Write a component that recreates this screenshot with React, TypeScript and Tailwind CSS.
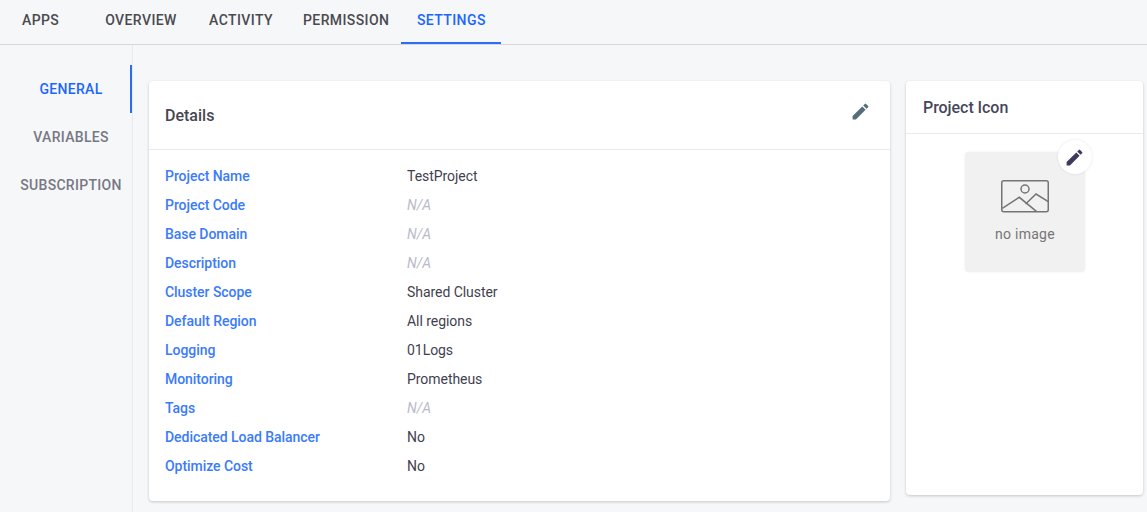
const TABS = ["OVERVIEW", "ACTIVITY", "PERMISSION", "SETTINGS"];
const SIDE_ITEMS = ["GENERAL", "VARIABLES", "SUBSCRIPTION"];

const DETAILS: { label: string; value?: string }[] = [
  { label: "Project Name", value: "TestProject" },
  { label: "Project Code" },
  { label: "Base Domain" },
  { label: "Description" },
  { label: "Cluster Scope", value: "Shared Cluster" },
  { label: "Default Region", value: "All regions" },
  { label: "Logging", value: "01Logs" },
  { label: "Monitoring", value: "Prometheus" },
  { label: "Tags" },
  { label: "Dedicated Load Balancer", value: "No" },
  { label: "Optimize Cost", value: "No" },
];

function PencilIcon({ className }: { className: string }) {
  return (
    <svg viewBox="0 0 24 24" className={className} fill="currentColor">
      <path d="M3 17.25V21h3.75L17.81 9.94l-3.75-3.75L3 17.25zM20.71 7.04a1 1 0 0 0 0-1.41l-2.34-2.34a1 1 0 0 0-1.41 0l-1.83 1.83 3.75 3.75 1.83-1.83z" />
    </svg>
  );
}

function NoImageIcon() {
  return (
    <svg viewBox="0 0 48 34" className="h-[34px] w-[48px]" fill="none" stroke="#757575" strokeWidth="1.5">
      <rect x="0.75" y="0.75" width="46.5" height="31" rx="2" />
      <circle cx="24" cy="9" r="4" />
      <path d="M1.3 28.3L18.3 17.3L35.7 31.7" />
      <path d="M24.7 24L35 14L47.3 21.7" />
    </svg>
  );
}

export default function App() {
  return (
    <div className="flex h-[512px] w-[1147px] flex-col overflow-hidden bg-[#f6f7f9] font-['Roboto',sans-serif] text-sm">
      <div className="flex h-[45px] shrink-0 border-b border-[#d5d7db]">
        <div className="flex w-[91px] items-center pb-[4px] pl-[22px] font-medium tracking-[0.4px] text-[#4a4a4f]">APPS</div>
        {TABS.map((tab) => (
          <div
            key={tab}
            className={
              tab === "SETTINGS"
                ? "flex min-w-[100px] items-center justify-center border-b-2 border-[#2b6ef6] px-3 pb-[2px] font-medium tracking-[0.4px] text-[#1a66ff]"
                : "flex min-w-[100px] items-center justify-center px-3 pb-[4px] font-medium tracking-[0.4px] text-[#4a4a4f]"
            }
          >
            {tab}
          </div>
        ))}
      </div>

      <div className="flex min-h-0 flex-1">
        <div className="w-[133px] shrink-0 border-r border-[#e8e9ec] pt-[20px]">
          {SIDE_ITEMS.map((item) => (
            <div
              key={item}
              className={
                item === "GENERAL"
                  ? "flex h-[48px] items-center justify-center border-r-2 border-[#2b6ef6] pl-[12px] font-medium tracking-[0.3px] text-[#1a66ff]"
                  : "flex h-[48px] items-center justify-center pl-[12px] pr-[2px] font-medium tracking-[0.3px] text-[#777784]"
              }
            >
              {item}
            </div>
          ))}
        </div>

        <div className="flex items-start gap-4 pl-4 pt-[36px]">
          <div className="h-[420px] w-[741px] rounded bg-white shadow-[0_1px_3px_rgba(0,0,0,0.2)]">
            <div className="flex h-[69px] items-center justify-between border-b border-[#ebebee] pl-4 pr-[19px]">
              <span className="pt-[1px] text-base font-medium text-[#46464f]">Details</span>
              <PencilIcon className="mb-[8px] h-[21px] w-[21px] text-[#546e7a]" />
            </div>
            <div className="pl-4 pt-[11px]">
              {DETAILS.map((row) => (
                <div key={row.label} className="flex h-[29px] items-center tracking-[-0.05px]">
                  <div className="w-[242px] font-medium text-[#3a7bfa]">{row.label}</div>
                  {row.value ? (
                    <div className="text-[#3f3f4f]">{row.value}</div>
                  ) : (
                    <div className="italic text-[#b9bbc9]">N/A</div>
                  )}
                </div>
              ))}
            </div>
          </div>

          <div className="h-[414px] w-[237px] rounded bg-white shadow-[0_1px_3px_rgba(0,0,0,0.2)]">
            <div className="flex h-[53px] items-center border-b border-[#ebebee] pl-[17px] pt-[2px] text-base font-medium tracking-[-0.05px] text-[#46465a]">
              Project Icon
            </div>
            <div className="flex justify-center pt-[18px]">
              <div className="relative flex h-[120px] w-[120px] flex-col items-center rounded bg-[#f1f1f1] pt-[28px] shadow-[0_0_3px_rgba(0,0,0,0.06)]">
                <NoImageIcon />
                <span className="mt-[10px] pl-[1px] tracking-[0.25px] text-[#757575]">no image</span>
                <div className="absolute right-[-7px] top-[-12px] flex h-[34px] w-[34px] items-center justify-center rounded-full bg-white shadow-[0_0_3px_rgba(0,0,0,0.1)]">
                  <PencilIcon className="h-[21px] w-[21px] text-[#3d3a5c]" />
                </div>
              </div>
            </div>
          </div>
        </div>
      </div>
    </div>
  );
}
